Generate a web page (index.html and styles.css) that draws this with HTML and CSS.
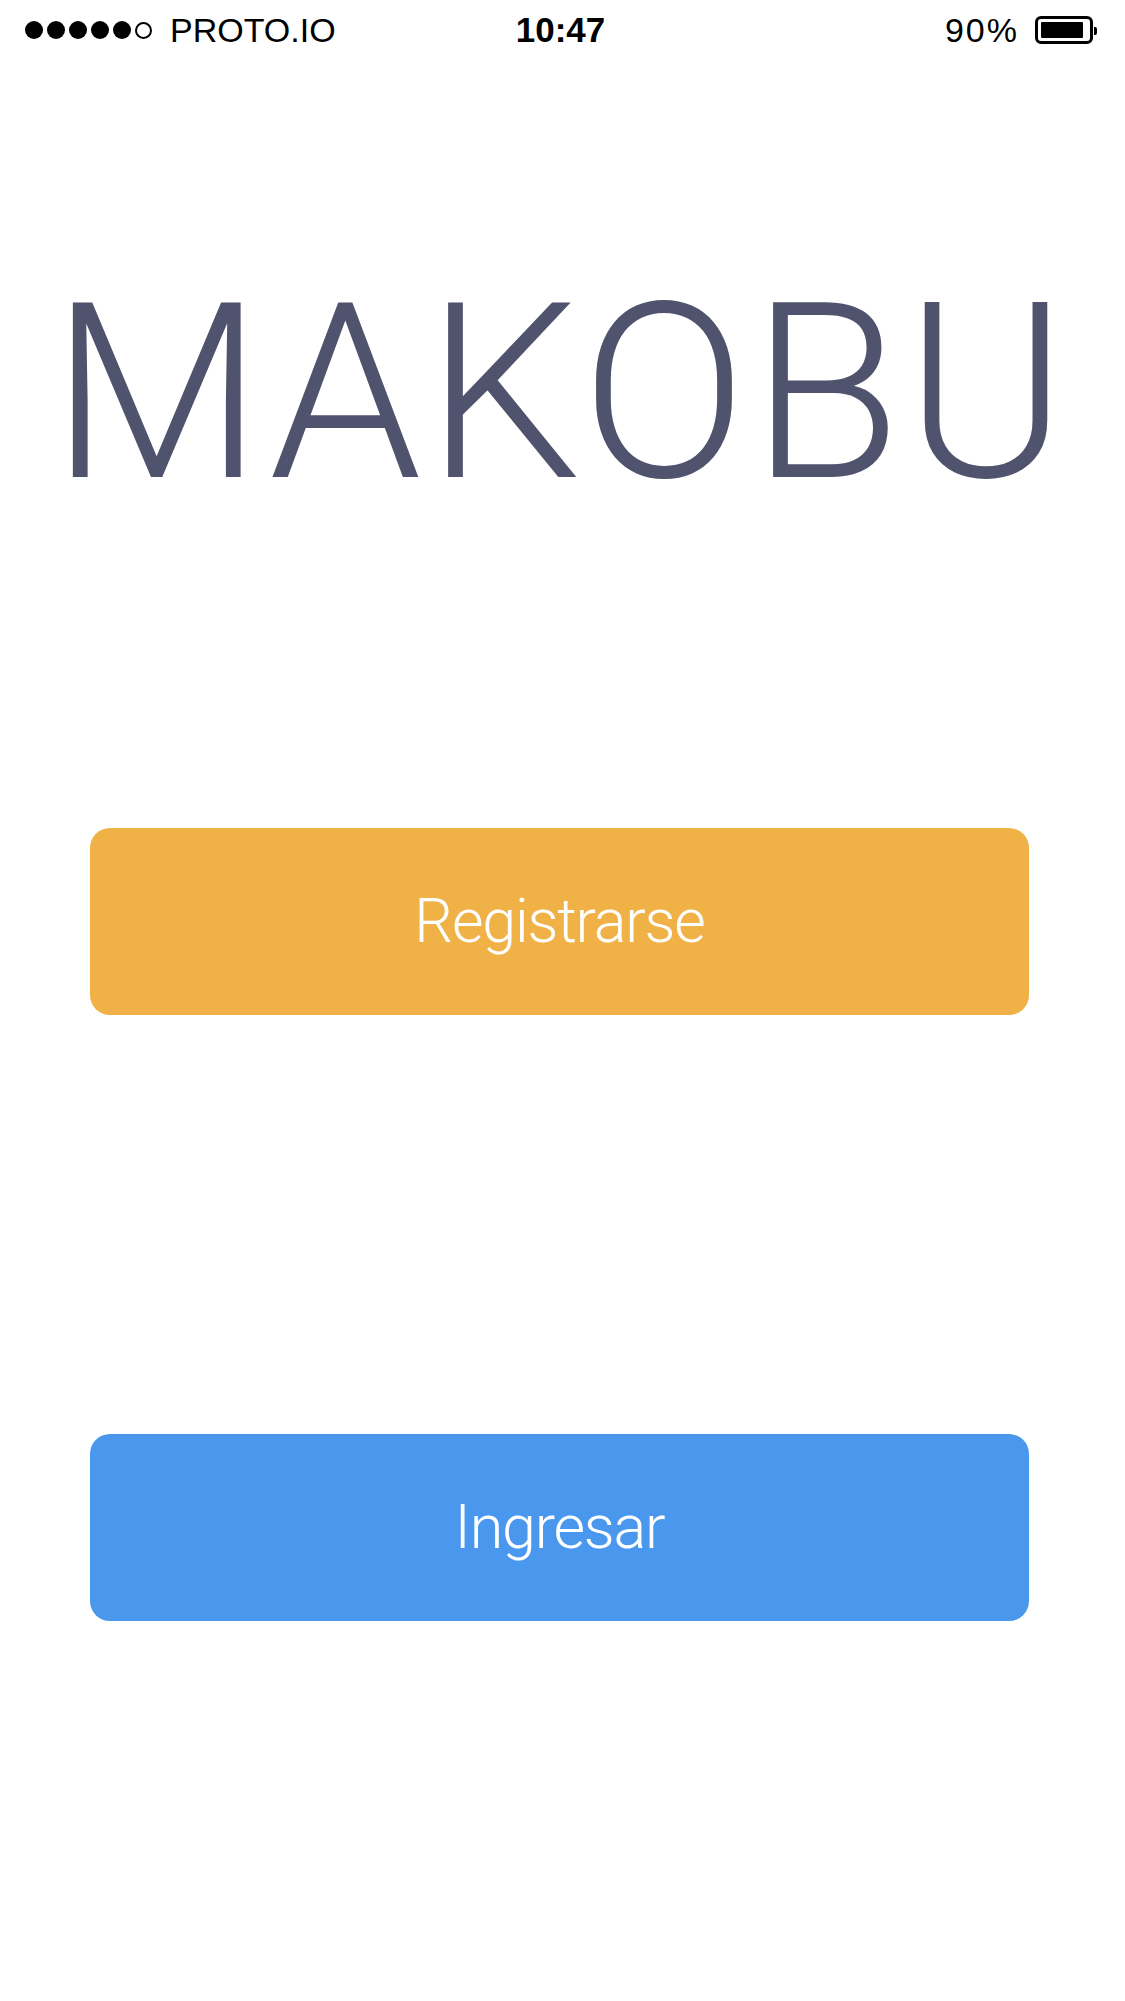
FILE: index.html
```html
<!DOCTYPE html>
<html lang="es">
<head>
    <meta charset="UTF-8">
    <meta name="viewport" content="width=device-width, initial-scale=1.0">
    <title>Makobu</title>
    <link rel="stylesheet" href="styles.css">
</head>
<body>

    <div class="status-bar">
        <div class="status-left">
            <span class="signal">
                <span class="dot"></span>
                <span class="dot"></span>
                <span class="dot"></span>
                <span class="dot"></span>
                <span class="dot"></span>
                <span class="dot empty"></span>
            </span>
            <span class="carrier">PROTO.IO</span>
        </div>
        <div class="status-time">10:47</div>
        <div class="status-right">
            <span class="battery-level">90%</span>
            <span class="battery"><span class="battery-fill"></span></span>
        </div>
    </div>

    <main class="welcome">
        <h1 class="brand">MAKOBU</h1>

        <button class="btn btn-register" onclick="register()">Registrarse</button>
        <button class="btn btn-login" onclick="login()">Ingresar</button>
    </main>

    <script>
        function register() {
            alert('Registro no disponible.');
        }

        function login() {
            alert('Ingreso no disponible.');
        }
    </script>

</body>
</html>
```

FILE: styles.css
```css
:root {
    --text: #000000;
    --brand: #50536e;
    --yellow: #f0b146;
    --blue: #4a98ee;
    --background: #ffffff;
    --radius: 20px;
}

* {
    box-sizing: border-box;
    margin: 0;
    padding: 0;
}

body {
    width: 1125px;
    font-family: 'Liberation Sans', Arial, Helvetica, sans-serif;
    background-color: var(--background);
    color: var(--text);
}

/* Status bar */
.status-bar {
    height: 60px;
    display: grid;
    grid-template-columns: 1fr auto 1fr;
    align-items: center;
    padding: 0 32px 0 25px;
    font-size: 34px;
}

.status-left {
    display: flex;
    align-items: center;
    gap: 18px;
}

.signal {
    display: flex;
    align-items: center;
    gap: 4px;
}

.dot {
    width: 18px;
    height: 18px;
    border-radius: 50%;
    background: #000;
}

.dot.empty {
    width: 17px;
    height: 17px;
    background: transparent;
    border: 2px solid #000;
}

.status-time {
    font-weight: 700;
    font-size: 35px;
    padding-left: 3px;
}

.status-right {
    display: flex;
    align-items: center;
    justify-content: flex-end;
    gap: 16px;
}

.battery-level {
    letter-spacing: 2px;
}

.battery {
    position: relative;
    width: 58px;
    height: 28px;
    border: 3px solid #000;
    border-radius: 6px;
    padding: 3px;
    display: flex;
}

.battery::after {
    content: '';
    position: absolute;
    right: -7px;
    top: 8px;
    width: 3px;
    height: 8px;
    background: #000;
    border-radius: 0 2px 2px 0;
}

.battery-fill {
    flex: 0 0 92%;
    background: #000;
    border-radius: 1px;
}

/* Welcome screen */
.welcome {
    display: flex;
    flex-direction: column;
    align-items: flex-start;
}

.brand {
    margin-top: 211px;
    width: 100%;
    text-align: center;
    font-family: Roboto, 'Liberation Sans', sans-serif;
    font-weight: 300;
    font-size: 245px;
    line-height: 1;
    letter-spacing: 4px;
    padding-right: 4px;
    color: var(--brand);
}

.btn {
    margin-left: 90px;
    width: 939px;
    height: 187px;
    border: none;
    border-radius: var(--radius);
    color: #fff;
    font-family: Roboto, 'Liberation Sans', sans-serif;
    font-weight: 300;
    font-size: 61px;
    line-height: 1;
    letter-spacing: -1.2px;
    cursor: pointer;
}

.btn-register {
    margin-top: 312px;
    background-color: var(--yellow);
}

.btn-login {
    margin-top: 419px;
    background-color: var(--blue);
}
```
